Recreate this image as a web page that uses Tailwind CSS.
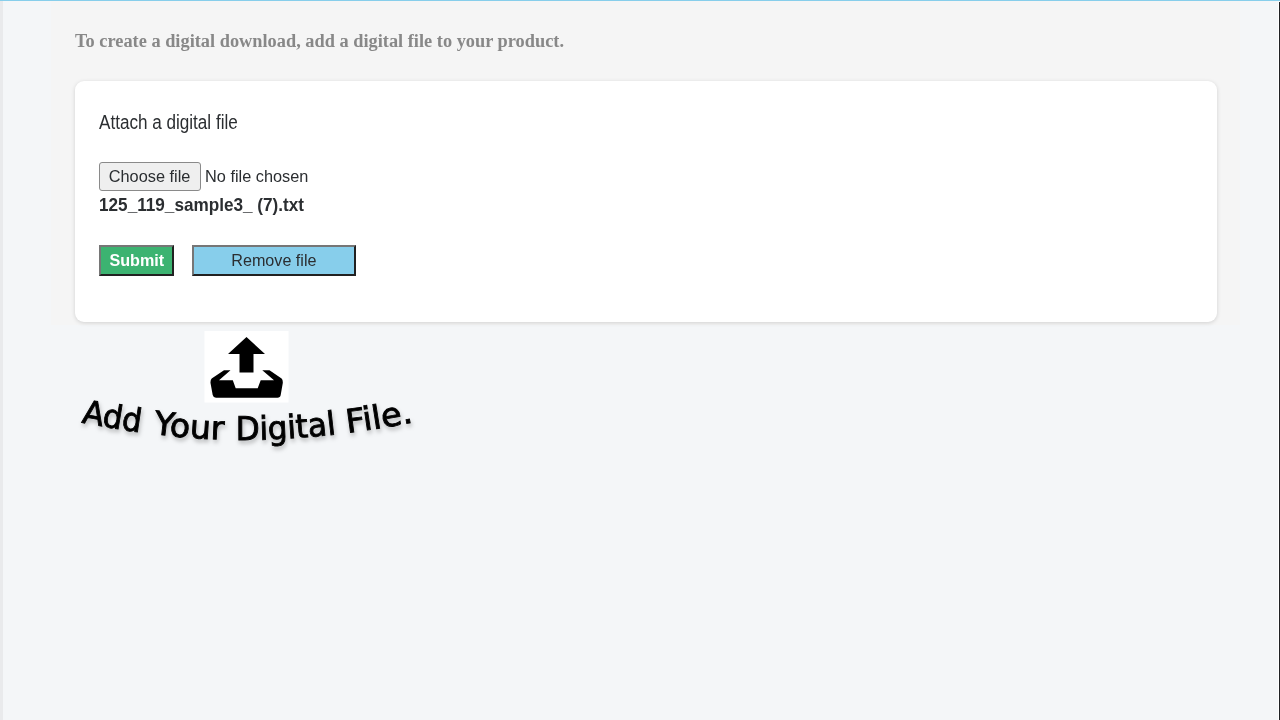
<!DOCTYPE html>
<html lang="en">
<head>
  <meta charset="UTF-8" />
  <meta name="viewport" content="width=device-width, initial-scale=1.0"/>
  <title>Digital download</title>
  <script src="https://cdn.jsdelivr.net/npm/@tailwindcss/browser@4"></script>
</head>
<body class="h-screen overflow-hidden flex bg-[#f4f6f8] border-t border-t-[#87ceeb] text-[#2b2e31] font-['Liberation_Sans',sans-serif]">

  <!-- Left edge -->
  <div class="w-[3px] shrink-0 bg-[#e9eaec]"></div>

  <main class="grow min-w-0 pl-12">
    <!-- Digital file form -->
    <section class="w-[1189px] h-[324px] pl-6 pt-7 bg-[#f5f5f5]">
      <h1 class="h-6 leading-6 text-[18px] font-bold text-[#888] whitespace-nowrap font-['Liberation_Serif',serif]"><span class="inline-block origin-left scale-x-[1.019]">To create a digital download, add a digital file to your product.</span></h1>

      <form class="mt-7 w-[1142px] h-[241px] px-6 pt-[29px] bg-white rounded-[9px] shadow-[0_1px_4px_rgba(0,0,0,0.15)]">
        <p class="h-6 leading-6 text-[20px] whitespace-nowrap"><span class="inline-block origin-left scale-x-[0.855]">Attach a digital file</span></p>

        <div class="mt-7 flex items-center h-[29px] whitespace-nowrap text-[17px]">
          <button type="button" class="w-[102px] h-[29px] rounded-[3px] border border-[#8a8a8a] bg-[#efefef]"><span class="inline-block scale-x-[0.96]">Choose file</span></button>
          <span class="ml-1 inline-block origin-left scale-x-[0.96]">No file chosen</span>
        </div>
        <p class="h-7 leading-7 text-[19px] font-bold whitespace-nowrap"><span class="inline-block origin-left scale-x-[0.903]">125_119_sample3_ (7).txt</span></p>

        <div class="mt-[26px] flex gap-[18px] text-[17px] whitespace-nowrap">
          <button type="button" class="w-[75px] h-[31px] border-2 border-t-[#767676] border-l-[#767676] border-b-[#212121] border-r-[#212121] bg-[#3cb371] font-bold text-white"><span class="inline-block scale-x-[0.95]">Submit</span></button>
          <button type="button" class="w-[164px] h-[31px] border-2 border-t-[#767676] border-l-[#767676] border-b-[#212121] border-r-[#212121] bg-[#87ceeb]"><span class="inline-block scale-x-[0.95]">Remove file</span></button>
        </div>
      </form>
    </section>

    <!-- Upload badge with curved caption -->
    <svg class="ml-[19px] mt-[5px] block" width="360" height="130" viewBox="70 330 360 130">
      <rect x="204.500" y="331" width="84" height="71.500" fill="#fff"/>
      <path d="M246.500 337L265 354H253.500V372.500H239.500V354H228Z"/>
      <path d="M224 370.300H230.500L219 380.200H232.800L235.700 388.200H257.700L260.700 380.200H274L262.300 370.300H269.500L281.600 378.600Q283 380 282.800 383L280.700 395Q280.200 397.700 277.500 397.700H216Q213.300 397.700 212.700 395L210.500 383Q210.300 380 211.700 378.600Z"/>
      <path id="curve" d="M81 422.500C140 434 195 440 246 440S360 433 420 421" fill="none"/>
      <g class="font-['DejaVu_Sans',sans-serif] drop-shadow-[1px_3px_2px_rgba(0,0,0,0.25)]" font-size="32.500" stroke="#000" stroke-width="0.900">
        <text><textPath href="#curve" textLength="60" lengthAdjust="spacingAndGlyphs">Add</textPath></text>
        <text><textPath href="#curve" startOffset="73" textLength="71" lengthAdjust="spacingAndGlyphs">Your</textPath></text>
        <text><textPath href="#curve" startOffset="156" textLength="101" lengthAdjust="spacingAndGlyphs">Digital</textPath></text>
        <text><textPath href="#curve" startOffset="268" textLength="67" lengthAdjust="spacingAndGlyphs">File.</textPath></text>
      </g>
    </svg>
  </main>

  <!-- Right edge -->
  <div class="mt-px w-[2px] shrink-0 bg-[#202124] border-l border-white"></div>
</body>
</html>
